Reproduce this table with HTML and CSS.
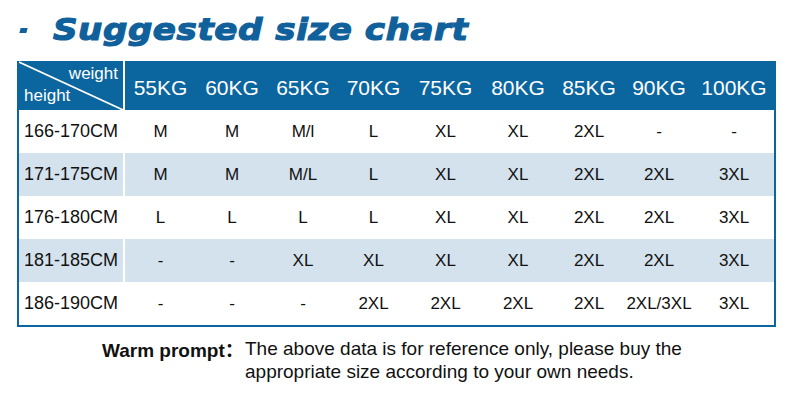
FILE: index.html
```html
<!DOCTYPE html>
<html>
<head>
<meta charset="utf-8">
<link rel="stylesheet" href="styles.css">
</head>
<body>
<div class="page">
  <h1 class="title"><span class="bullet"></span><span class="title-text">Suggested size chart</span></h1>
  <div class="chart">
    <div class="row head">
      <div class="cell corner">
        <svg class="diag" viewBox="0 0 106 49" preserveAspectRatio="none"><line x1="0" y1="1" x2="106" y2="49" stroke="#fff" stroke-width="1.6"/></svg>
        <span class="w">weight</span>
        <span class="h">height</span>
      </div>
      <div class="cell">55KG</div><div class="cell">60KG</div><div class="cell">65KG</div><div class="cell">70KG</div><div class="cell">75KG</div><div class="cell">80KG</div><div class="cell">85KG</div><div class="cell">90KG</div><div class="cell">100KG</div>
    </div>
    <div class="row">
      <div class="cell first">166-170CM</div>
      <div class="cell">M</div><div class="cell">M</div><div class="cell">M/l</div><div class="cell">L</div><div class="cell">XL</div><div class="cell">XL</div><div class="cell">2XL</div><div class="cell">-</div><div class="cell">-</div>
    </div>
    <div class="row alt">
      <div class="cell first">171-175CM</div>
      <div class="cell">M</div><div class="cell">M</div><div class="cell">M/L</div><div class="cell">L</div><div class="cell">XL</div><div class="cell">XL</div><div class="cell">2XL</div><div class="cell">2XL</div><div class="cell">3XL</div>
    </div>
    <div class="row">
      <div class="cell first">176-180CM</div>
      <div class="cell">L</div><div class="cell">L</div><div class="cell">L</div><div class="cell">L</div><div class="cell">XL</div><div class="cell">XL</div><div class="cell">2XL</div><div class="cell">2XL</div><div class="cell">3XL</div>
    </div>
    <div class="row alt">
      <div class="cell first">181-185CM</div>
      <div class="cell">-</div><div class="cell">-</div><div class="cell">XL</div><div class="cell">XL</div><div class="cell">XL</div><div class="cell">XL</div><div class="cell">2XL</div><div class="cell">2XL</div><div class="cell">3XL</div>
    </div>
    <div class="row">
      <div class="cell first">186-190CM</div>
      <div class="cell">-</div><div class="cell">-</div><div class="cell">-</div><div class="cell">2XL</div><div class="cell">2XL</div><div class="cell">2XL</div><div class="cell">2XL</div><div class="cell">2XL/3XL</div><div class="cell">3XL</div>
    </div>
  </div>
  <div class="prompt">
    <div class="label">Warm prompt<span class="colon">：</span></div>
    <div class="text">The above data is for reference only, please buy the appropriate size according to your own needs.</div>
  </div>
</div>
</body>
</html>
```

FILE: styles.css
```css
html, body {
  margin: 0;
  padding: 0;
  background: #ffffff;
}
.page {
  width: 800px;
  height: 412px;
  font-family: "Liberation Sans", Arial, sans-serif;
  color: #111;
}
.title {
  margin: 0;
  height: 61px;
  display: flex;
  align-items: center;
  padding-left: 20px;
  box-sizing: border-box;
  padding-bottom: 4px;
}
.bullet {
  width: 7px;
  height: 5px;
  background: #11629c;
  transform: skewX(-15deg);
  margin-right: 26px;
  margin-top: 3px;
}
.title-text {
  display: inline-block;
  font-family: "DejaVu Sans", sans-serif;
  font-weight: bold;
  font-style: italic;
  font-size: 31px;
  color: #10609b;
  -webkit-text-stroke: 1.2px #10609b;
  letter-spacing: 0.5px;
  transform: scaleX(1.1);
  transform-origin: left center;
}
.chart {
  margin-left: 17px;
  width: 759px;
  box-sizing: border-box;
  border: 2px solid #0b659f;
  border-top: none;
}
.row {
  display: grid;
  grid-template-columns: 106px 71px 72px 70px 71px 73px 72px 70px 70px 1fr;
  height: 43px;
  background: #ffffff;
}
.row.alt {
  background: #d4e2ee;
}
.row.head {
  height: 49px;
  background: #0b659f;
  color: #ffffff;
}
.cell {
  display: flex;
  align-items: center;
  justify-content: center;
  font-size: 17px;
  white-space: nowrap;
}
.head .cell {
  font-size: 21px;
  padding-top: 5px;
  box-sizing: border-box;
}
.cell.first {
  justify-content: flex-start;
  padding-left: 5px;
  font-size: 18px;
  border-right: 2px solid #ffffff;
}
.head .cell.corner {
  position: relative;
  border-right: 2px solid #ffffff;
  padding: 0;
  display: block;
  font-size: 17px;
}
.diag {
  position: absolute;
  left: 0;
  top: 0;
  width: 100%;
  height: 100%;
}
.corner .w {
  position: absolute;
  right: 5px;
  top: 3px;
}
.corner .h {
  position: absolute;
  left: 5px;
  bottom: 4px;
}
.prompt {
  display: flex;
  margin-top: 10px;
  margin-left: 102px;
  font-size: 19px;
  line-height: 23px;
  color: #111;
}
.label {
  font-weight: bold;
  width: 143px;
  flex: none;
}
.colon {
  font-family: "Noto Sans CJK SC", sans-serif;
  font-weight: bold;
}
.text {
  width: 460px;
}
```
